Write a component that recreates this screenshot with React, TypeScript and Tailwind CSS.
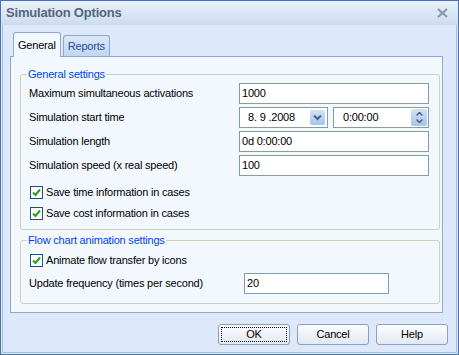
import React from 'react';

const font = { fontFamily: '"Liberation Sans", Arial, sans-serif' };

function TextBox({ value, className }: { value: string; className: string }) {
  return (
    <div className={`h-[21px] border border-[#7f9db9] bg-white flex items-center px-[2px] text-[11px] text-black ${className}`}>
      {value}
    </div>
  );
}

function Check({ label }: { label: string }) {
  return (
    <div className="flex items-center h-[13px] text-[11px] text-black">
      <div className="w-[13px] h-[13px] border border-[#1c5180] bg-white flex items-center justify-center ml-[9px] mr-[3px]">
        <svg width="9" height="9" viewBox="0 0 9 9">
          <path d="M1 4.5 L3.5 7 L8 1.5" fill="none" stroke="#21a121" strokeWidth="2" />
        </svg>
      </div>
      <span>{label}</span>
    </div>
  );
}

function Row({ label, children }: { label: string; children: React.ReactNode }) {
  return (
    <div className="flex items-center h-[21px] text-[11px] text-black">
      <span className="w-[218px] pl-[8px] shrink-0">{label}</span>
      {children}
    </div>
  );
}

function Group({ title, className, children }: { title: string; className: string; children: React.ReactNode }) {
  return (
    <div className={`relative border border-[#d0d0bf] rounded-[3px] ${className}`}>
      <span className="absolute -top-[8px] left-[6px] bg-[#f3f8ff] px-[1px] text-[11px] leading-[14px] text-[#0046d5]">
        {title}
      </span>
      {children}
    </div>
  );
}

function Button({ label, focused }: { label: string; focused?: boolean }) {
  return (
    <div className="w-[72px] h-[21px] rounded-[3px] border border-[#8aa0bd] bg-gradient-to-b from-[#fbfcfe] to-[#e2e9f2] flex items-center justify-center p-[2px] text-[11px] text-black">
      <div className={`w-full h-full flex items-center justify-center ${focused ? 'border border-dotted border-black' : ''}`}>
        {label}
      </div>
    </div>
  );
}

export default function App() {
  return (
    <div style={font} className="w-[459px] h-[355px] border border-[#4e72a5] bg-[#dde9fa] flex flex-col overflow-hidden tracking-[-0.2px]">
      <div className="h-[24px] shrink-0 bg-gradient-to-b from-[#e9f1fb] to-[#cbdcf2] flex items-center justify-between pl-[5px] pr-[10px]">
        <span className="text-[13px] font-bold text-[#56657a]">Simulation Options</span>
        <svg width="11" height="10" viewBox="0 0 11 10">
          <path d="M1 1 L10 9 M10 1 L1 9" stroke="#8795a8" strokeWidth="2" />
        </svg>
      </div>
      <div className="flex-1 border-x border-b border-[#a8c0e2] mx-[1px] mb-[1px] flex flex-col pl-[7px] pr-[7px]">
        <div className="flex items-end h-[31px] pl-[3px] pt-[6px]">
          <div className="h-[25px] px-[4px] border border-b-0 border-[#8fa8c8] rounded-t-[3px] bg-[#f3f8ff] flex items-center text-[11px] text-black -mb-[1px] relative z-10">
            General
          </div>
          <div className="h-[21px] ml-[2px] px-[4px] border border-b-0 border-[#8fa8c8] rounded-t-[3px] bg-gradient-to-b from-[#dbe7f8] to-[#c3d6f1] flex items-center text-[11px] text-[#1e4e9c]">
            Reports
          </div>
        </div>
        <div className="w-[433px] h-[257px] border border-[#8fa8c8] bg-[#f3f8ff] pl-[9px] pt-[17px] flex flex-col">
          <Group title="General settings" className="w-[420px] h-[156px] pt-[8px] flex flex-col">
            <div className="flex flex-col gap-[3px]">
              <Row label="Maximum simultaneous activations">
                <TextBox value="1000" className="w-[190px]" />
              </Row>
              <Row label="Simulation start time">
                <div className="w-[89px] h-[21px] border border-[#7f9db9] bg-white flex items-center justify-between pl-[8px] pr-[2px]">
                  <span>8. 9 .2008</span>
                  <div className="w-[15px] h-[15px] rounded-[2px] bg-gradient-to-b from-[#d3e1f7] to-[#a9c3ec] flex items-center justify-center">
                    <svg width="9" height="7" viewBox="0 0 9 7">
                      <path d="M1 1.5 L4.5 5 L8 1.5" fill="none" stroke="#4d6185" strokeWidth="2" />
                    </svg>
                  </div>
                </div>
                <div className="w-[96px] h-[21px] ml-[5px] border border-[#7f9db9] bg-white flex items-center justify-between pl-[9px] pr-[1px]">
                  <span>0:00:00</span>
                  <div className="w-[16px] h-[17px] rounded-[2px] bg-gradient-to-b from-[#d3e1f7] to-[#a9c3ec] flex flex-col items-center justify-center gap-[3px]">
                    <svg width="7" height="4" viewBox="0 0 7 4">
                      <path d="M0.5 3.5 L3.5 0.5 L6.5 3.5" fill="none" stroke="#4d6185" strokeWidth="1.5" />
                    </svg>
                    <svg width="7" height="4" viewBox="0 0 7 4">
                      <path d="M0.5 0.5 L3.5 3.5 L6.5 0.5" fill="none" stroke="#4d6185" strokeWidth="1.5" />
                    </svg>
                  </div>
                </div>
              </Row>
              <Row label="Simulation length">
                <TextBox value="0d 0:00:00" className="w-[190px]" />
              </Row>
              <Row label="Simulation speed (x real speed)">
                <TextBox value="100" className="w-[190px]" />
              </Row>
            </div>
            <div className="flex flex-col gap-[8px] mt-[10px]">
              <Check label="Save time information in cases" />
              <Check label="Save cost information in cases" />
            </div>
          </Group>
          <Group title="Flow chart animation settings" className="w-[420px] h-[64px] mt-[10px] pt-[13px] flex flex-col">
            <Check label="Animate flow transfer by icons" />
            <div className="flex items-center h-[21px] mt-[6px] text-[11px] text-black">
              <span className="w-[223px] pl-[8px] shrink-0">Update frequency (times per second)</span>
              <TextBox value="20" className="w-[145px]" />
            </div>
          </Group>
        </div>
        <div className="flex justify-end gap-[7px] mt-[11px] pr-[1px]">
          <Button label="OK" focused />
          <Button label="Cancel" />
          <Button label="Help" />
        </div>
      </div>
    </div>
  );
}
